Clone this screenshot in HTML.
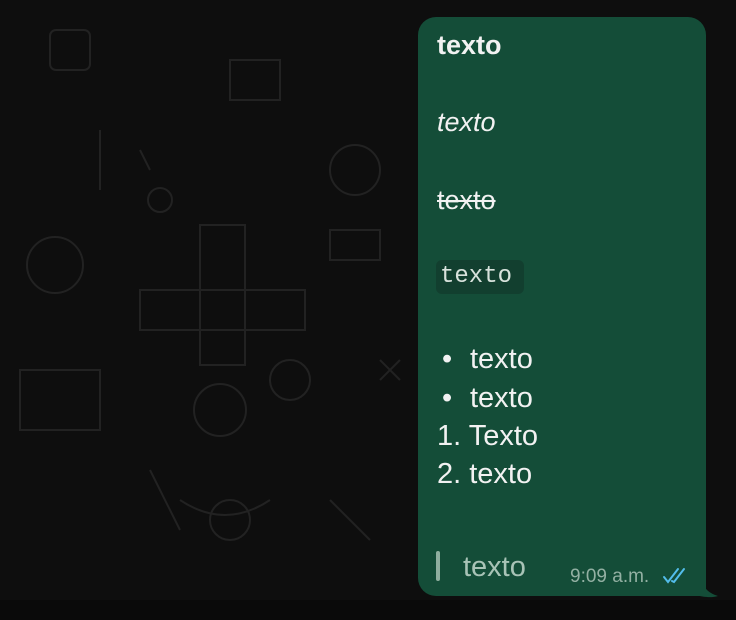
<!DOCTYPE html>
<html><head><meta charset="utf-8"><style>
html,body{margin:0;padding:0;width:736px;height:620px;overflow:hidden;background:#0e0e0e;font-family:"Liberation Sans",sans-serif;}
.bg{position:absolute;left:0;top:0;width:736px;height:600px;}
.bottom{position:absolute;left:0;top:600px;width:736px;height:20px;background:#0a0a0a;}
.bub{position:absolute;left:418px;top:17px;width:288px;height:579px;background:#144d38;border-radius:18px 18px 6px 18px;}
.tail{position:absolute;left:700px;top:575px;}
.t{position:absolute;left:437px;color:#f2f2f2;font-size:29px;line-height:32px;white-space:nowrap;}
</style></head><body>
<svg class="bg" width="736" height="600" fill="none" stroke="#222" stroke-width="2">
<circle cx="55" cy="265" r="28"/><circle cx="290" cy="380" r="20"/><circle cx="220" cy="410" r="26"/><circle cx="355" cy="170" r="25"/>
<rect x="140" y="290" width="165" height="40"/><rect x="200" y="225" width="45" height="140"/>
<rect x="50" y="30" width="40" height="40" rx="6"/><rect x="230" y="60" width="50" height="40"/>
<path d="M20 370h80v60h-80zM150 470l30 60M330 230h50v30h-50zM180 500c30 20 60 20 90 0M330 500l40 40M100 130v60M140 150l10 20"/>
<circle cx="230" cy="520" r="20"/><circle cx="160" cy="200" r="12"/><path d="M380 360l20 20m0-20l-20 20"/>
</svg>
<div class="bottom"></div>
<div class="bub"></div>
<svg class="tail" width="20" height="25"><path d="M0 0 C2 12 8 18 18 21 C12 23 4 22 0 21Z" fill="#144d38"/></svg>
<div class="t" style="top:29px;font-weight:bold;font-size:27px;">texto</div>
<div class="t" style="top:106px;font-style:italic;font-size:27px;">texto</div>
<div class="t" style="top:184px;text-decoration:line-through;font-size:27px;">texto</div>
<div style="position:absolute;left:436px;top:260px;width:88px;height:34px;background:#123f2f;border-radius:6px;"></div>
<div class="t" style="top:261px;left:440px;font-family:'Liberation Mono',monospace;font-size:24px;color:#d8e2dc;">texto</div>
<div class="t" style="top:343px;"><span style="position:absolute;left:5px">•</span><span style="position:absolute;left:33px">texto</span></div>
<div class="t" style="top:382px;"><span style="position:absolute;left:5px">•</span><span style="position:absolute;left:33px">texto</span></div>
<div class="t" style="top:420px;">1. Texto</div>
<div class="t" style="top:458px;">2. texto</div>
<div style="position:absolute;left:436px;top:551px;width:4px;height:30px;background:#8fae9f;border-radius:2px;"></div>
<div class="t" style="top:551px;left:463px;color:#a8c3b6;">texto</div>
<div style="position:absolute;left:570px;top:566px;font-size:19px;color:#93b0a3;">9:09 a.m.</div>
<svg style="position:absolute;left:662px;top:567px" width="28" height="18" fill="none" stroke="#53bdeb" stroke-width="2" stroke-linecap="round"><path d="M2 10l4 5 10-13M10 14l2 1 10-13"/></svg>
</body></html>
